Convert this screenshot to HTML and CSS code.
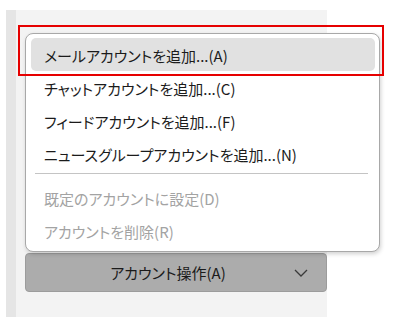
FILE: index.html
```html
<!DOCTYPE html>
<html lang="ja">

<head>
    <meta charset="UTF-8">
    <meta name="viewport" content="width=device-width, initial-scale=1.0">
    <title>アカウント操作</title>
    <link rel="stylesheet" href="styles.css">
</head>

<body>

    <div class="sidebar">
        <button class="account-btn" type="button">
            <span class="btn-label">アカウント操作(A)</span>
            <svg class="chevron" width="14" height="8" viewBox="0 0 14 8">
                <path d="M1 1 L7 7 L13 1" fill="none" stroke="#3a3a3a" stroke-width="1.3"/>
            </svg>
        </button>
    </div>

    <ul class="menu">
        <li class="item active">メールアカウントを追加...(A)</li>
        <li class="item">チャットアカウントを追加...(C)</li>
        <li class="item">フィードアカウントを追加...(F)</li>
        <li class="item">ニュースグループアカウントを追加...(N)</li>
        <li class="separator"></li>
        <li class="item disabled">既定のアカウントに設定(D)</li>
        <li class="item disabled">アカウントを削除(R)</li>
    </ul>

    <div class="highlight-box"></div>

</body>

</html>
```

FILE: styles.css
```css
body {
    margin: 0;
    background-color: #fff;
    font-family: "Noto Sans CJK JP", "Noto Sans", sans-serif;
    font-feature-settings: "palt";
    font-size: 15px;
    color: #1b1b1b;
    overflow: hidden;
    height: 317px;
}

.sidebar {
    margin: 10px 0 0 6px;
    width: 321px;
    height: 307px;
    background-color: #f3f3f3;
    border-left: 10px solid #e5e5e5;
    padding-top: 243px;
    box-sizing: border-box;
}

.account-btn {
    display: flex;
    align-items: center;
    margin-left: 9px;
    width: 302px;
    height: 39px;
    padding: 0 18px 0 16px;
    box-sizing: border-box;
    background-color: #acacac;
    border: 1px solid #9c9c9c;
    border-radius: 4px;
    font: inherit;
    color: #1b1b1b;
}

.btn-label {
    flex: 1;
    text-align: center;
}

.chevron {
    flex-shrink: 0;
}

.menu {
    position: absolute;
    left: 25px;
    top: 33px;
    width: 355px;
    margin: 0;
    padding: 4px 4px 4px 5px;
    box-sizing: border-box;
    list-style: none;
    background-color: #fff;
    border: 1px solid #a8a8a8;
    border-radius: 8px;
    box-shadow: 1px 2px 4px rgba(0, 0, 0, 0.18);
}

.item {
    height: 33px;
    line-height: 30px;
    padding: 3px 0 0 13px;
    box-sizing: border-box;
    border-radius: 5px;
    white-space: nowrap;
}

.item.active {
    background-color: #e1e1e1;
}

.item.disabled {
    color: #a3a3a3;
}

.separator {
    height: 1px;
    margin: 3px 7px 7px 4px;
    background-color: #c4c4c4;
}

.highlight-box {
    position: absolute;
    left: 18px;
    top: 25px;
    width: 366px;
    height: 51px;
    box-sizing: border-box;
    border: 2px solid #e60000;
}
```
